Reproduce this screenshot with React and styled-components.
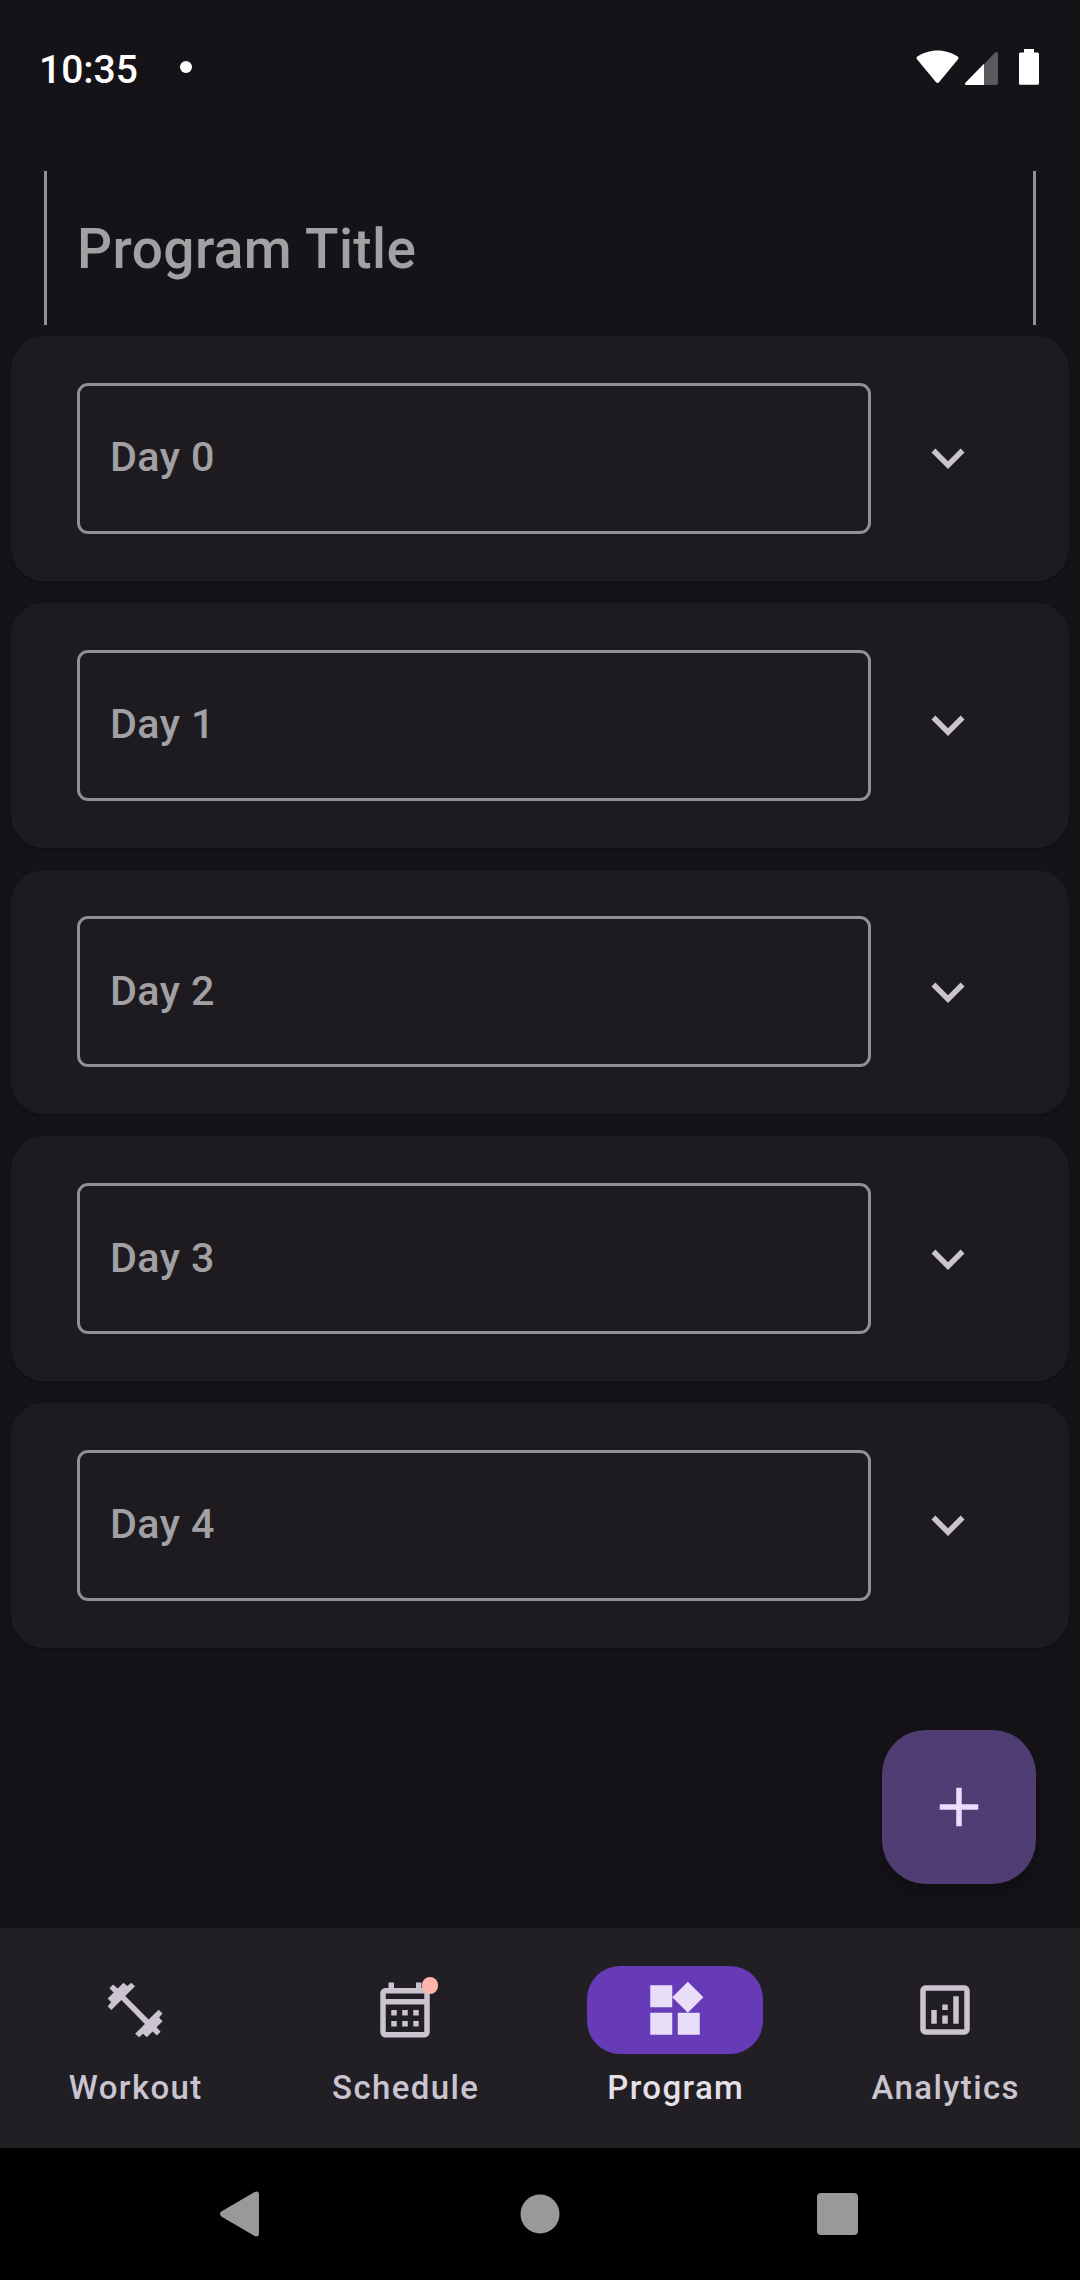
import React from 'react';
import styled, { createGlobalStyle } from 'styled-components';

const GlobalStyle = createGlobalStyle`
  * { box-sizing: border-box; }
  body {
    margin: 0;
    background: #151317;
    font-family: Roboto, "Noto Sans", sans-serif;
    font-weight: 500;
  }
`;

const Screen = styled.div`
  position: relative;
  display: flex;
  flex-direction: column;
  width: 1080px;
  height: 2280px;
  overflow: hidden;
  background: #151317;
`;

const StatusBar = styled.header`
  display: flex;
  align-items: center;
  height: 136px;
  padding: 0 41px 0 39px;
  color: #fff;
`;

const Clock = styled.span`
  width: 98px;
  font-size: 39px;
  line-height: 46px;
  padding-top: 4px;
`;

const NotificationDot = styled.span`
  width: 12px;
  height: 12px;
  margin: 0 auto 2px 43px;
  border-radius: 50%;
  background: #fff;
`;

const StatusIcon = styled.svg`
  display: block;
  width: ${(p) => p.$w}px;
  height: 36px;
  margin-left: ${(p) => p.$gap || 0}px;
  margin-bottom: 2px;
`;

const Content = styled.main`
  position: relative;
  flex: 1;
  display: flex;
  flex-direction: column;
  padding: 35px 11px 0;
`;

const TitleField = styled.div`
  display: flex;
  align-items: center;
  height: 154px;
  margin: 0 33px 11px;
  padding: 2px 30px 0;
  border: solid #938f99;
  border-width: 0 3px;
  color: #a1a0a3;
  font-size: 55px;
  line-height: 66px;
  letter-spacing: 0.4125px;
`;

const DayList = styled.div`
  display: flex;
  flex-direction: column;
  gap: 22px;
`;

const DayCard = styled.section`
  display: flex;
  align-items: center;
  height: 244.75px;
  padding: 0 55px 0 66px;
  border-radius: 33px;
  background: #1d1b20;
  box-shadow: 0 2px 4px rgba(0, 0, 0, 0.22);
`;

const DayField = styled.div`
  display: flex;
  flex: none;
  align-items: center;
  width: 794px;
  height: 151px;
  padding: 0 30px 2px;
  border: 3px solid #938f99;
  border-radius: 11px;
  color: #a1a0a3;
  font-size: 41.25px;
  line-height: 50px;
  letter-spacing: 0.4125px;
`;

const ExpandButton = styled.button`
  display: flex;
  flex: none;
  align-items: center;
  justify-content: center;
  width: 132px;
  height: 132px;
  margin-left: 11px;
  padding: 0;
  border: 0;
  background: none;
  color: #cac4d0;
`;

const Icon = styled.svg`
  display: block;
  width: 66px;
  height: 66px;
  fill: currentColor;
`;

const Fab = styled.button`
  position: absolute;
  right: 44px;
  bottom: 44px;
  display: flex;
  align-items: center;
  justify-content: center;
  width: 154px;
  height: 154px;
  padding: 0;
  border: 0;
  border-radius: 44px;
  background: #4f3d74;
  color: #eaddff;
  box-shadow: 0 8px 18px rgba(0, 0, 0, 0.3);
`;

const TabBar = styled.nav`
  display: flex;
  height: 220px;
  padding-top: 38px;
  background: #211f24;
`;

const Tab = styled.a`
  flex: 1;
  display: flex;
  flex-direction: column;
  align-items: center;
  gap: 12px;
  color: ${(p) => (p.$active ? '#e6e0e9' : '#cac4d0')};
`;

const Indicator = styled.span`
  position: relative;
  display: flex;
  align-items: center;
  justify-content: center;
  width: 176px;
  height: 88px;
  border-radius: 33px;
  background: ${(p) => (p.$active ? '#673ab7' : 'transparent')};
  color: ${(p) => (p.$active ? '#e8def8' : 'inherit')};
`;

const Badge = styled.span`
  position: absolute;
  top: 11px;
  right: 55px;
  width: 16.5px;
  height: 16.5px;
  border-radius: 50%;
  background: #ffb4ab;
`;

const TabLabel = styled.span`
  padding-left: 1.5px;
  font-size: 33px;
  line-height: 44px;
  letter-spacing: 1.375px;
`;

const SystemBar = styled.footer`
  display: flex;
  align-items: center;
  justify-content: space-between;
  height: 132px;
  padding: 0 222px 0 220px;
  background: #000;
`;

const SystemIcon = styled.svg`
  display: block;
  width: ${(p) => p.$w}px;
  height: 46px;
  fill: #999;
`;

const icons = {
  expand: 'M16.59 8.59L12 13.17 7.41 8.59 6 10l6 6 6-6z',
  add: 'M19 13h-6v6h-2v-6H5v-2h6V5h2v6h6v2z',
  dumbbell:
    'M2.7 4.05L4.05 2.7 5.7 4.2 7.8 2.05 9.2 3.3 10.65 2.05 12 3.4 8.45 6.95 16.95 15.45 20.6 11.9 22 13.3 20.75 14.7 22 16.1 19.85 18.25 21.3 19.95 19.95 21.3 18.4 19.8 16.3 21.95 14.9 20.65 13.5 21.95 12.05 20.6 15.6 17.05 7.05 8.4 3.4 12 2.05 10.6 3.35 9.2 2.05 7.8 4.25 5.65z',
  calendar:
    'M19 4h-1V2h-2v2H8V2H6v2H5c-1.11 0-1.99.9-1.99 2L3 20a2 2 0 0 0 2 2h14c1.1 0 2-.9 2-2V6c0-1.1-.9-2-2-2zm0 16H5V10h14v10zm0-12H5V6h14v2zM9 14H7v-2h2v2zm4 0h-2v-2h2v2zm4 0h-2v-2h2v2zm-8 4H7v-2h2v2zm4 0h-2v-2h2v2zm4 0h-2v-2h2v2z',
  widgets:
    'M13 13v8h8v-8h-8zM3 21h8v-8H3v8zM3 3v8h8V3H3zm13.66-1.31L11 7.34 16.66 13l5.66-5.66-5.66-5.65z',
  analytics:
    'M19 3H5c-1.1 0-2 .9-2 2v14c0 1.1.9 2 2 2h14c1.1 0 2-.9 2-2V5c0-1.1-.9-2-2-2zm0 2v14H5V5h14zM7 12h2v5H7zM15 7h2v10h-2zM11 14h2v3h-2zM11 10h2v2h-2z',
};

const Glyph = ({ name }) => (
  <Icon viewBox="0 0 24 24">
    <path d={icons[name]} fillRule="evenodd" />
  </Icon>
);

const days = ['Day 0', 'Day 1', 'Day 2', 'Day 3', 'Day 4'];

const tabs = [
  { label: 'Workout', icon: 'dumbbell' },
  { label: 'Schedule', icon: 'calendar', badge: true },
  { label: 'Program', icon: 'widgets', active: true },
  { label: 'Analytics', icon: 'analytics' },
];

export default function App() {
  return (
    <Screen>
      <GlobalStyle />
      <StatusBar>
        <Clock>10:35</Clock>
        <NotificationDot />
        <StatusIcon $w={43} viewBox="0 0 43 36">
          <path
            fill="#fff"
            d="M1.3 7.6C7 3.7 14 1.4 21.5 1.4S36 3.7 41.7 7.6c.9.6 1 1.7.3 2.6L23 33.2c-.8 1-2.2 1-3 0L1 10.2c-.7-.9-.6-2 .3-2.6z"
          />
        </StatusIcon>
        <StatusIcon $w={33} $gap={6} viewBox="0 0 33 36">
          <path fill="#5b595e" d="M19 15.2L30.2 3.6c1.1-1.2 2.8-.7 2.8.9V34c0 1.2-.8 2-2 2H19z" />
          <path fill="#fff" d="M19 14.8V36H1.5C0 36-.4 34.4.6 33.4z" />
        </StatusIcon>
        <StatusIcon $w={20} $gap={21} viewBox="0 0 20 36">
          <path
            fill="#fff"
            d="M5 0h10v3.6h3.4c.9 0 1.6.7 1.6 1.6v29c0 .9-.7 1.6-1.6 1.6H1.6C.7 35.8 0 35.1 0 34.2v-29c0-.9.7-1.6 1.6-1.6H5z"
          />
        </StatusIcon>
      </StatusBar>

      <Content>
        <TitleField>Program Title</TitleField>
        <DayList>
          {days.map((day) => (
            <DayCard key={day}>
              <DayField>{day}</DayField>
              <ExpandButton>
                <Glyph name="expand" />
              </ExpandButton>
            </DayCard>
          ))}
        </DayList>
        <Fab>
          <Glyph name="add" />
        </Fab>
      </Content>

      <TabBar>
        {tabs.map((tab) => (
          <Tab key={tab.label} $active={tab.active}>
            <Indicator $active={tab.active}>
              <Glyph name={tab.icon} />
              {tab.badge && <Badge />}
            </Indicator>
            <TabLabel>{tab.label}</TabLabel>
          </Tab>
        ))}
      </TabBar>

      <SystemBar>
        <SystemIcon $w={39} viewBox="0 0 39 46">
          <path d="M1.3 20.6L34.6 1c2-1.3 4.4-.5 4.400 1.900v40.200c0 2.400-2.400 3.200-4.400 1.900L1.300 25.400c-1.700-1.200-1.700-3.600 0-4.800z" />
        </SystemIcon>
        <SystemIcon $w={44} viewBox="0 0 44 46">
          <circle cx="24" cy="23" r="19.5" />
        </SystemIcon>
        <SystemIcon $w={41} viewBox="0 0 41 46">
          <rect y="2" width="41" height="42" rx="4" />
        </SystemIcon>
      </SystemBar>
    </Screen>
  );
}
